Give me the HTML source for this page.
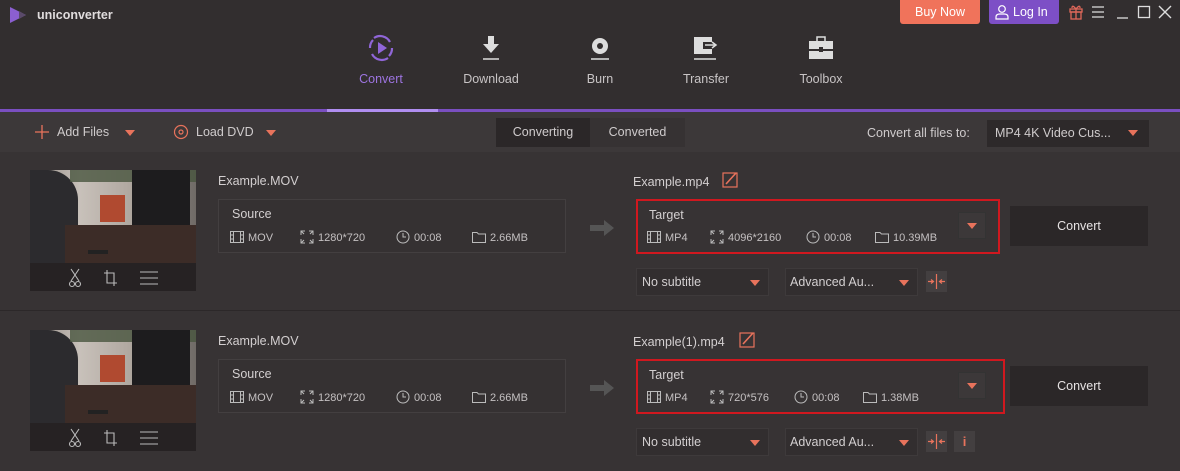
<!DOCTYPE html>
<html><head><meta charset="utf-8"><style>
*{margin:0;padding:0;box-sizing:border-box}
body{width:1180px;height:471px;overflow:hidden;background:#373334;font-family:"Liberation Sans",sans-serif;color:#cfcbcc;position:relative;font-size:12px}
.a{position:absolute}
.hdr{left:0;top:0;width:1180px;height:110px;background:#322e2f}
.nav{top:32px;width:90px;text-align:center;font-size:12.5px;color:#c8c4c5}
.nav svg{display:block;margin:0 auto 8px}
.tb{left:0;top:112px;width:1180px;height:40px;background:#3c3839}
.row{left:0;width:1180px;height:158px;background:#373334;border-bottom:1px solid #2c2829}
.thumb{left:30px;width:166px;height:121px;background:#262223;overflow:hidden}
.img{left:0;top:0;width:166px;height:93px;background:linear-gradient(90deg,#8d8580 0%,#c8c1ba 30%,#b0a8a0 60%,#6f6a66 100%)}
.box{border:1px solid #433f40;background:#353132}
.lbl{font-size:12.5px;color:#d3cfd0}
.info{font-size:11px;color:#c4c0c1;line-height:14px;white-space:nowrap}
.info svg{vertical-align:-3px;margin-right:4px}
.red{border:2px solid #d0181f}
.dd{background:#322e2f;border:1px solid #3e3a3b;height:28px}
.tri{width:0;height:0;border-left:5px solid transparent;border-right:5px solid transparent;border-top:6px solid #e8735c}
.cbtn{background:#2b2728;width:138px;height:40px;text-align:center;line-height:40px;color:#e6e2e3;font-size:12.5px}
.sq{width:21px;height:21px;background:#433f40}
</style></head><body>
<svg width="0" height="0" style="position:absolute"><defs>
<g id="film" fill="none" stroke="#bbb" stroke-width="1"><rect x="0.5" y="1.5" width="13" height="11"/><path d="M3.5,1.5V12.5M10.5,1.5V12.5M0.5,5H3.5M0.5,9H3.5M10.5,5H13.5M10.5,9H13.5"/></g>
<g id="res" fill="none" stroke="#bbb" stroke-width="1"><path d="M1,5V1H5M9,1H13V5M13,9V13H9M5,13H1V9M1,1L4,4M13,1L10,4M13,13L10,10M1,13L4,10"/></g>
<g id="clk" fill="none" stroke="#bbb" stroke-width="1"><circle cx="7" cy="7" r="6"/><path d="M7,3V7H10"/></g>
<g id="fld" fill="none" stroke="#bbb" stroke-width="1"><path d="M0.5,2.5H5L6.5,4H13.5V12.5H0.5Z"/></g>
<g id="spl" fill="none" stroke="#e8735c" stroke-width="1.2"><path d="M10.5,3V18M2,10.5H7M5,8.5L7.5,10.5L5,12.5M19,10.5H14M16,8.5L13.5,10.5L16,12.5"/></g>
</defs></svg>
<div class="a hdr"></div>
<svg class="a" style="left:9px;top:6px" width="20" height="18"><polygon points="1,1 17,9 1,17" fill="#8b5fd1"/><polygon points="10,5 17,9 10,13" fill="#5a4a6a"/></svg>
<div class="a" style="left:37px;top:8px;font-weight:bold;font-size:12.5px;color:#e0dcdd">uniconverter</div>

<div class="a" style="left:900px;top:0;width:80px;height:24px;background:#f0735b;border-radius:0 0 3px 3px;color:#fff;text-align:center;line-height:24px;font-size:12.5px">Buy Now</div>
<div class="a" style="left:989px;top:0;width:70px;height:24px;background:#7d4fc6;border-radius:0 0 3px 3px;color:#fff;line-height:24px;font-size:12.5px;padding-left:24px">Log In</div>
<svg class="a" style="left:994px;top:4px" width="16" height="16"><circle cx="8" cy="5" r="3.3" fill="none" stroke="#fff" stroke-width="1.2"/><path d="M2,15 V13 Q2,10 6,10 H10 Q14,10 14,13 V15 Z" fill="none" stroke="#fff" stroke-width="1.2"/></svg>
<svg class="a" style="left:1068px;top:4px" width="16" height="16"><rect x="2" y="5" width="12" height="3" fill="none" stroke="#e2685a" stroke-width="1.3"/><rect x="3" y="8" width="10" height="7" fill="none" stroke="#e2685a" stroke-width="1.3"/><path d="M8,5 V15 M8,5 Q4,0 4,4 M8,5 Q12,0 12,4" fill="none" stroke="#e2685a" stroke-width="1.3"/></svg>
<svg class="a" style="left:1091px;top:5px" width="14" height="14"><path d="M1,2H13M1,7H13M1,12H13" stroke="#ddd" stroke-width="1.3"/></svg>
<svg class="a" style="left:1115px;top:5px" width="60" height="14"><path d="M2,13H13" stroke="#ddd" stroke-width="1.3"/><rect x="23.5" y="1.5" width="11" height="11" fill="none" stroke="#ddd" stroke-width="1.3"/><path d="M44,1L56,13M56,1L44,13" stroke="#ddd" stroke-width="1.4"/></svg>

<div class="a nav" style="left:336px;color:#9d74e0"><svg width="32" height="32" viewBox="0 0 32 32"><path d="M25,10 A11,11 0 0 0 9,6" fill="none" stroke="#9066d8" stroke-width="2.2"/><path d="M7,22 A11,11 0 0 0 23,26" fill="none" stroke="#9066d8" stroke-width="2.2"/><path d="M5,16 A11,11 0 0 1 8,8" fill="none" stroke="#9066d8" stroke-width="2.2"/><path d="M27,16 A11,11 0 0 1 24,24" fill="none" stroke="#9066d8" stroke-width="2.2"/><polygon points="13,10 22,16 13,22" fill="#9066d8"/></svg>Convert</div>
<div class="a nav" style="left:446px"><svg width="32" height="32"><rect x="13" y="4" width="6" height="9" fill="#ddd"/><polygon points="8,12 24,12 16,21" fill="#ddd"/><path d="M8,27H24" stroke="#ddd" stroke-width="1.5"/></svg>Download</div>
<div class="a nav" style="left:555px"><svg width="32" height="32"><circle cx="16" cy="14" r="8" fill="#ddd"/><circle cx="16" cy="14" r="3" fill="#322e2f"/><path d="M7,27H25" stroke="#ddd" stroke-width="1.5"/></svg>Burn</div>
<div class="a nav" style="left:661px"><svg width="32" height="32"><path d="M4,5H22V10H13V17H22V22H4Z" fill="#ddd"/><path d="M15,13H25M22,10L26,13L22,16" fill="none" stroke="#ddd" stroke-width="1.5"/><path d="M4,27H26" stroke="#ddd" stroke-width="1.5"/></svg>Transfer</div>
<div class="a nav" style="left:776px"><svg width="32" height="32"><path d="M12,9V5H20V9" fill="none" stroke="#ddd" stroke-width="1.5"/><rect x="4" y="9" width="24" height="8" fill="#ddd"/><rect x="4" y="19" width="24" height="8" fill="#ddd"/><rect x="14" y="15" width="4" height="5" fill="#322e2f"/></svg>Toolbox</div>

<div class="a" style="left:0;top:109px;width:1180px;height:3px;background:#7a4fc0"></div>
<div class="a" style="left:327px;top:109px;width:111px;height:3px;background:#b08ef0"></div>

<div class="a tb"></div>
<svg class="a" style="left:35px;top:125px" width="14" height="14"><path d="M7,0V14M0,7H14" stroke="#e8735c" stroke-width="1.3"/></svg>
<div class="a" style="left:57px;top:125px;font-size:12.5px">Add Files</div>
<div class="a tri" style="left:125px;top:130px"></div>
<svg class="a" style="left:173px;top:124px" width="16" height="16"><circle cx="8" cy="8" r="6.5" fill="none" stroke="#e8735c" stroke-width="1.2"/><circle cx="8" cy="8" r="2" fill="none" stroke="#e8735c" stroke-width="1.2"/></svg>
<div class="a" style="left:196px;top:125px;font-size:12.5px">Load DVD</div>
<div class="a tri" style="left:266px;top:130px"></div>
<div class="a" style="left:496px;top:118px;width:94px;height:29px;background:#2b2728;text-align:center;line-height:29px;font-size:12.5px">Converting</div>
<div class="a" style="left:590px;top:118px;width:95px;height:29px;background:#363233;text-align:center;line-height:29px;font-size:12.5px">Converted</div>
<div class="a" style="left:867px;top:126px;font-size:12.5px">Convert all files to:</div>
<div class="a" style="left:987px;top:120px;width:162px;height:27px;background:#2d292a;line-height:27px;padding-left:8px;font-size:12.5px">MP4 4K Video Cus...</div>
<div class="a tri" style="left:1128px;top:130px"></div>

<div class="a row" style="top:153px"></div>
<div class="a row" style="top:312px;border-bottom:none"></div>

<div class="a thumb" style="top:170px"><div class="a img"></div>
<div class="a" style="left:0;top:0;width:48px;height:93px;background:#2c2b2e;border-radius:0 30px 0 0"></div>
<div class="a" style="left:40px;top:0;width:126px;height:12px;background:#49553f;opacity:.8"></div>
<div class="a" style="left:70px;top:25px;width:25px;height:27px;background:#b04a30"></div>
<div class="a" style="left:102px;top:0;width:58px;height:56px;background:#1d1c1e"></div>
<div class="a" style="left:35px;top:55px;width:131px;height:38px;background:#3c2c27"></div>
<div class="a" style="left:58px;top:80px;width:20px;height:4px;background:#222"></div>
</div>
<div class="a thumb" style="top:330px"><div class="a img"></div>
<div class="a" style="left:0;top:0;width:48px;height:93px;background:#2c2b2e;border-radius:0 30px 0 0"></div>
<div class="a" style="left:40px;top:0;width:126px;height:12px;background:#49553f;opacity:.8"></div>
<div class="a" style="left:70px;top:25px;width:25px;height:27px;background:#b04a30"></div>
<div class="a" style="left:102px;top:0;width:58px;height:56px;background:#1d1c1e"></div>
<div class="a" style="left:35px;top:55px;width:131px;height:38px;background:#3c2c27"></div>
<div class="a" style="left:58px;top:80px;width:20px;height:4px;background:#222"></div>
</div>
<svg class="a" style="left:65px;top:268px" width="100" height="20"><g fill="none" stroke="#bbb" stroke-width="1.1"><path d="M6,1L14,13M14,1L6,13"/><circle cx="7" cy="16" r="2.5"/><circle cx="13" cy="16" r="2.5"/><path d="M42,2V15H52M39,5H49V18"/><path d="M75,4H93M75,10H93M75,16H93"/></g></svg>
<svg class="a" style="left:65px;top:428px" width="100" height="20"><g fill="none" stroke="#bbb" stroke-width="1.1"><path d="M6,1L14,13M14,1L6,13"/><circle cx="7" cy="16" r="2.5"/><circle cx="13" cy="16" r="2.5"/><path d="M42,2V15H52M39,5H49V18"/><path d="M75,4H93M75,10H93M75,16H93"/></g></svg>

<!-- row1 -->
<div class="a lbl" style="left:218px;top:174px">Example.MOV</div>
<div class="a box" style="left:218px;top:199px;width:348px;height:54px"></div>
<div class="a lbl" style="left:232px;top:207px">Source</div>
<div class="a info" style="left:230px;top:230px"><svg width="14" height="14"><use href="#film"/></svg>MOV</div>
<div class="a info" style="left:300px;top:230px"><svg width="14" height="14"><use href="#res"/></svg>1280*720</div>
<div class="a info" style="left:396px;top:230px"><svg width="14" height="14"><use href="#clk"/></svg>00:08</div>
<div class="a info" style="left:472px;top:230px"><svg width="14" height="14"><use href="#fld"/></svg>2.66MB</div>
<svg class="a" style="left:590px;top:220px" width="26" height="16"><path d="M0,5H14V0L24,8L14,16V11H0Z" fill="#555"/></svg>
<div class="a lbl" style="left:633px;top:175px">Example.mp4</div>
<svg class="a" style="left:722px;top:171px" width="17" height="17"><rect x="1" y="2" width="14" height="14" fill="none" stroke="#e8735c" stroke-width="1.2"/><path d="M4,13L14,2" stroke="#e8735c" stroke-width="1.6"/></svg>
<div class="a red" style="left:636px;top:199px;width:364px;height:55px"></div>
<div class="a lbl" style="left:649px;top:208px">Target</div>
<div class="a info" style="left:647px;top:230px"><svg width="14" height="14"><use href="#film"/></svg>MP4</div>
<div class="a info" style="left:710px;top:230px"><svg width="14" height="14"><use href="#res"/></svg>4096*2160</div>
<div class="a info" style="left:806px;top:230px"><svg width="14" height="14"><use href="#clk"/></svg>00:08</div>
<div class="a info" style="left:875px;top:230px"><svg width="14" height="14"><use href="#fld"/></svg>10.39MB</div>
<div class="a" style="left:958px;top:212px;width:28px;height:27px;background:#3c3839;border:1px solid #333"></div>
<div class="a tri" style="left:967px;top:223px"></div>
<div class="a cbtn" style="left:1010px;top:206px">Convert</div>
<div class="a dd" style="left:636px;top:268px;width:133px"></div>
<div class="a lbl" style="left:642px;top:275px">No subtitle</div>
<div class="a tri" style="left:750px;top:280px"></div>
<div class="a dd" style="left:785px;top:268px;width:133px"></div>
<div class="a lbl" style="left:790px;top:275px">Advanced Au...</div>
<div class="a tri" style="left:899px;top:280px"></div>
<svg class="a sq" style="left:926px;top:271px" width="21" height="21"><use href="#spl"/></svg>

<!-- row2 -->
<div class="a lbl" style="left:218px;top:334px">Example.MOV</div>
<div class="a box" style="left:218px;top:359px;width:348px;height:54px"></div>
<div class="a lbl" style="left:232px;top:367px">Source</div>
<div class="a info" style="left:230px;top:390px"><svg width="14" height="14"><use href="#film"/></svg>MOV</div>
<div class="a info" style="left:300px;top:390px"><svg width="14" height="14"><use href="#res"/></svg>1280*720</div>
<div class="a info" style="left:396px;top:390px"><svg width="14" height="14"><use href="#clk"/></svg>00:08</div>
<div class="a info" style="left:472px;top:390px"><svg width="14" height="14"><use href="#fld"/></svg>2.66MB</div>
<svg class="a" style="left:590px;top:380px" width="26" height="16"><path d="M0,5H14V0L24,8L14,16V11H0Z" fill="#555"/></svg>
<div class="a lbl" style="left:633px;top:335px">Example(1).mp4</div>
<svg class="a" style="left:739px;top:331px" width="17" height="17"><rect x="1" y="2" width="14" height="14" fill="none" stroke="#e8735c" stroke-width="1.2"/><path d="M4,13L14,2" stroke="#e8735c" stroke-width="1.6"/></svg>
<div class="a red" style="left:636px;top:359px;width:369px;height:55px"></div>
<div class="a lbl" style="left:649px;top:368px">Target</div>
<div class="a info" style="left:647px;top:390px"><svg width="14" height="14"><use href="#film"/></svg>MP4</div>
<div class="a info" style="left:710px;top:390px"><svg width="14" height="14"><use href="#res"/></svg>720*576</div>
<div class="a info" style="left:794px;top:390px"><svg width="14" height="14"><use href="#clk"/></svg>00:08</div>
<div class="a info" style="left:863px;top:390px"><svg width="14" height="14"><use href="#fld"/></svg>1.38MB</div>
<div class="a" style="left:958px;top:372px;width:28px;height:27px;background:#3c3839;border:1px solid #333"></div>
<div class="a tri" style="left:967px;top:383px"></div>
<div class="a cbtn" style="left:1010px;top:366px">Convert</div>
<div class="a dd" style="left:636px;top:428px;width:133px"></div>
<div class="a lbl" style="left:642px;top:435px">No subtitle</div>
<div class="a tri" style="left:750px;top:440px"></div>
<div class="a dd" style="left:785px;top:428px;width:133px"></div>
<div class="a lbl" style="left:790px;top:435px">Advanced Au...</div>
<div class="a tri" style="left:899px;top:440px"></div>
<svg class="a sq" style="left:926px;top:431px" width="21" height="21"><use href="#spl"/></svg>
<div class="a sq" style="left:954px;top:431px;color:#e8735c;text-align:center;line-height:21px;font-size:13px;font-weight:bold">i</div>
</body></html>
